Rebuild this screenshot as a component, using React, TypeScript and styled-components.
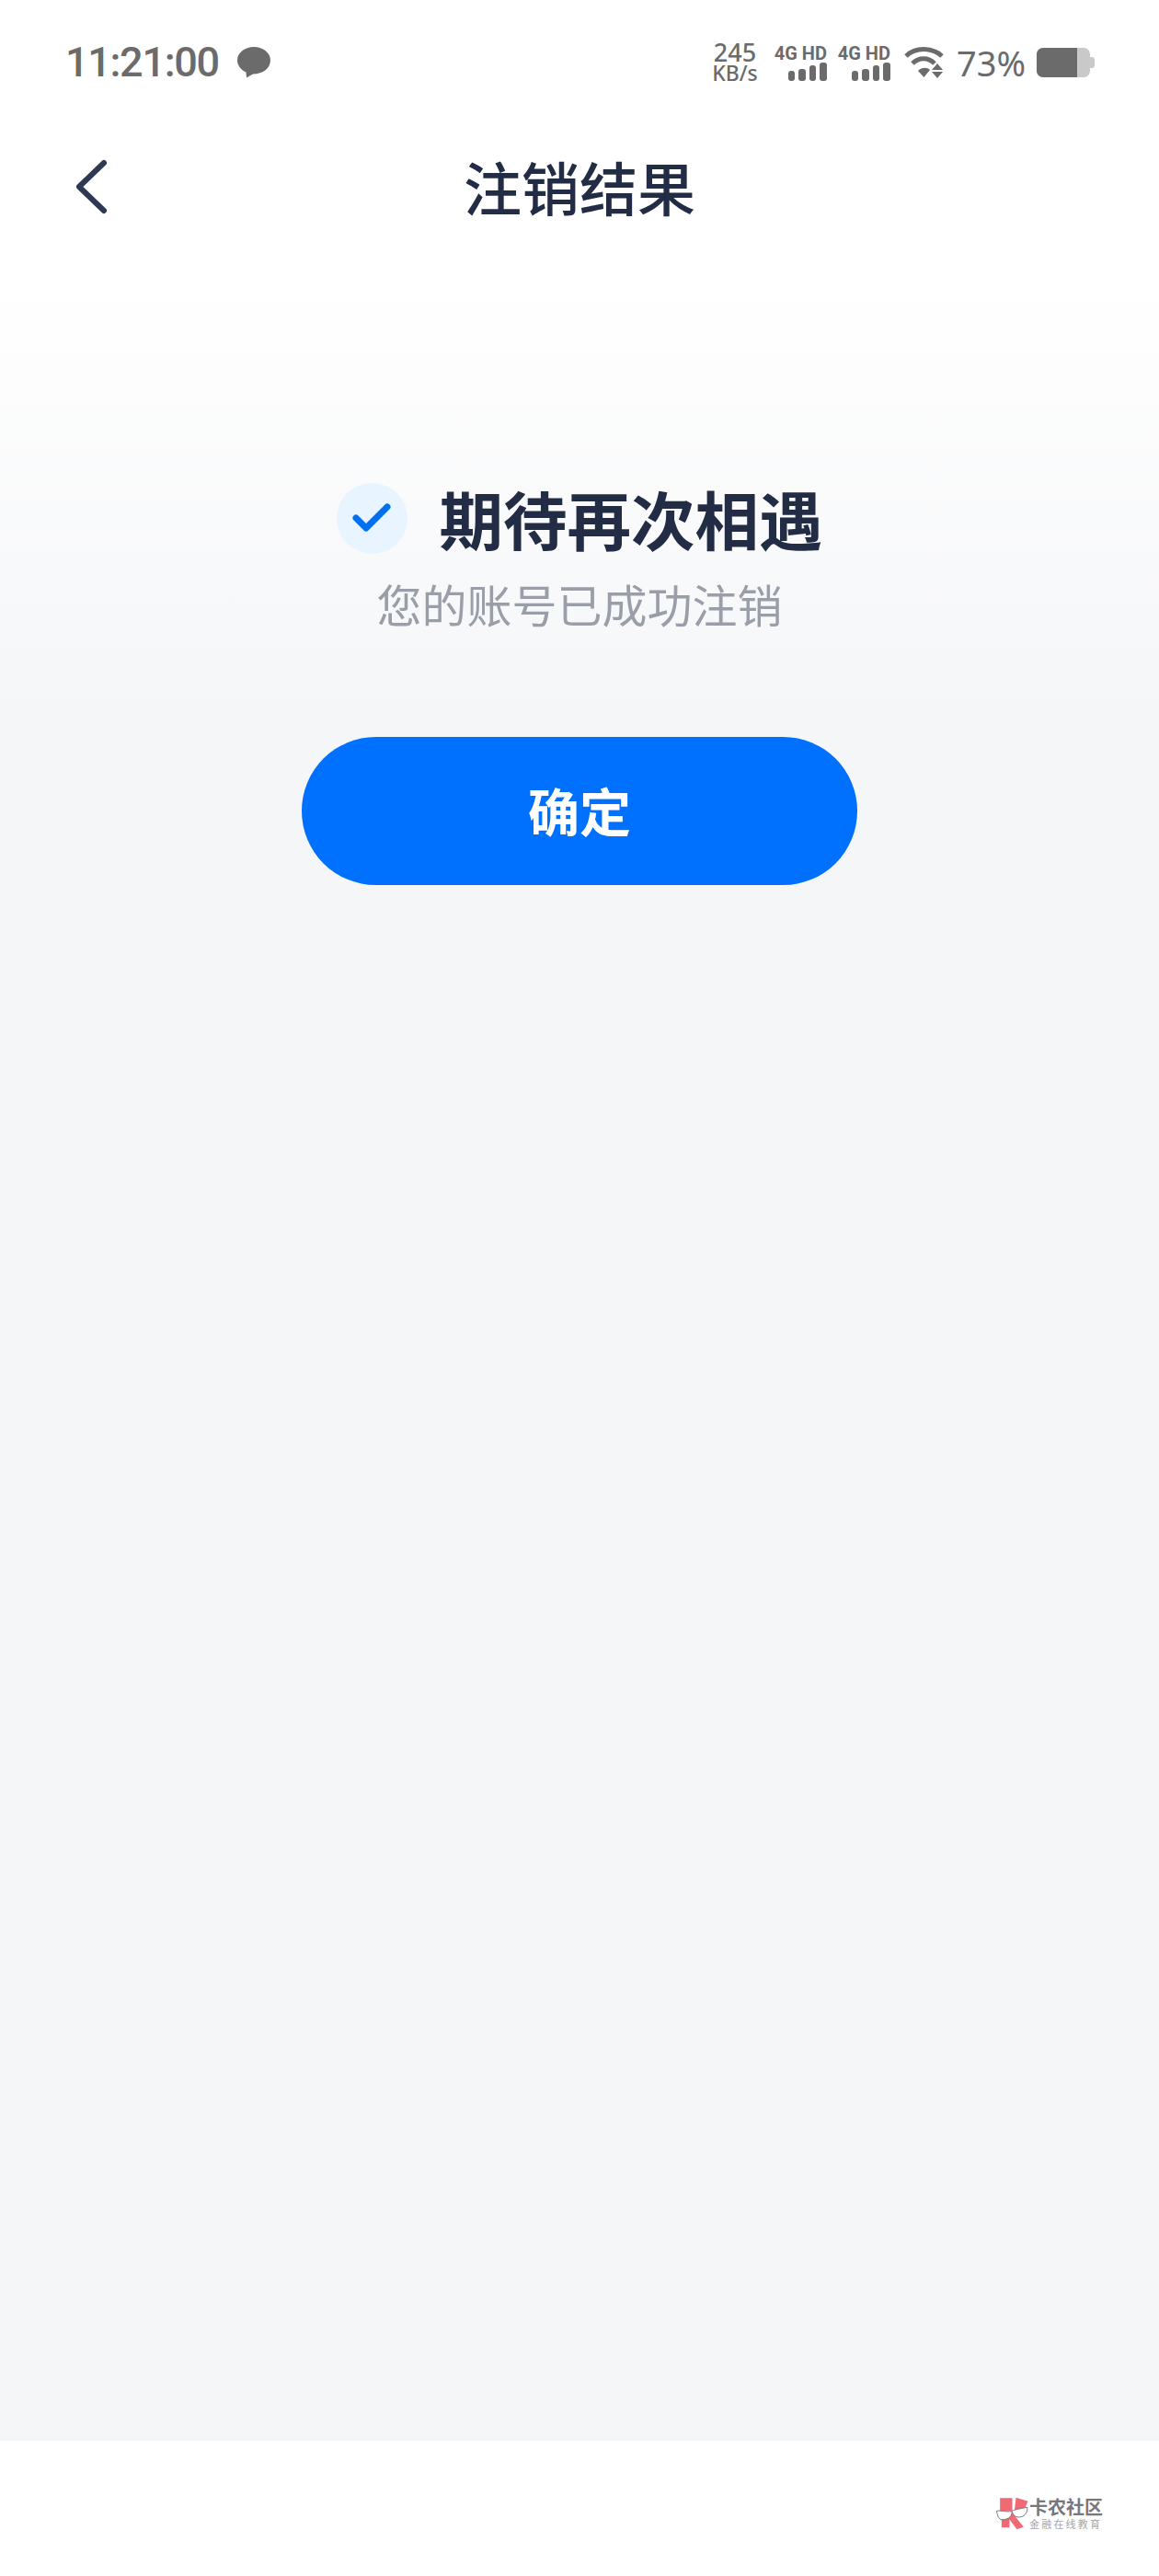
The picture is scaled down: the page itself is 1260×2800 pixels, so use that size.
import React from 'react';
import styled, { createGlobalStyle } from 'styled-components';

const GlobalStyle = createGlobalStyle`
  html, body {
    margin: 0;
    padding: 0;
    background: #ffffff;
  }
  body {
    font-family: 'Noto Sans CJK SC', 'Noto Sans', sans-serif;
  }
`;

const Page = styled.div`
  display: flex;
  flex-direction: column;
  width: 1260px;
  height: 2800px;
  overflow: hidden;
`;

const StatusBar = styled.div`
  display: flex;
  align-items: center;
  justify-content: space-between;
  height: 135px;
  padding: 0 70px 0 71px;
  box-sizing: border-box;
  color: #6b6b6b;
`;

const StatusGroup = styled.div`
  display: flex;
  align-items: center;
`;

const Clock = styled.span`
  font-family: Roboto, sans-serif;
  font-size: 45px;
  font-weight: 500;
  letter-spacing: -1.3px;
  line-height: 1;
`;

const Speed = styled.div`
  display: flex;
  flex-direction: column;
  align-items: center;
  width: 50px;
  margin-right: 18px;
  font-family: 'Noto Sans', sans-serif;
  font-weight: 500;
  line-height: 23px;
`;

const SpeedValue = styled.span`
  font-size: 27px;
`;

const SpeedUnit = styled.span`
  font-size: 23px;
`;

const Signal = styled.div`
  display: flex;
  flex-direction: column;
  align-items: flex-end;
  width: 57px;
  margin-right: 12px;
`;

const SignalLabel = styled.span`
  font-family: Roboto, sans-serif;
  font-size: 20px;
  font-weight: 700;
  line-height: 20px;
  white-space: nowrap;
`;

const Percent = styled.span`
  margin: 0 12px 0 13px;
  font-family: 'Noto Sans', sans-serif;
  font-size: 38px;
  line-height: 1;
`;

const Header = styled.header`
  display: flex;
  align-items: center;
  justify-content: center;
  position: relative;
  height: 140px;
  padding-bottom: 8px;
  box-sizing: border-box;
`;

const BackButton = styled.button`
  position: absolute;
  left: 80px;
  top: 36px;
  display: flex;
  padding: 0;
  border: none;
  background: none;
`;

const Title = styled.h1`
  margin: 0;
  font-size: 63px;
  font-weight: 500;
  line-height: 1;
  color: #222c45;
`;

const Content = styled.main`
  flex: 1;
  display: flex;
  flex-direction: column;
  align-items: center;
  background: linear-gradient(to bottom, #ffffff 30px, #f5f6f8 510px);
  padding-top: 248px;
`;

const Headline = styled.div`
  display: flex;
  align-items: center;
  gap: 35px;
`;

const CheckBadge = styled.span`
  display: flex;
  align-items: center;
  justify-content: center;
  width: 77px;
  height: 77px;
  border-radius: 50%;
  background: #e8f4ff;
`;

const HeadlineText = styled.h2`
  margin: 0;
  font-size: 69.5px;
  font-weight: 700;
  line-height: 80px;
  color: #222c45;
`;

const Subtitle = styled.p`
  margin: 21px 0 0;
  font-size: 49px;
  line-height: 64px;
  color: #9a9ea9;
`;

const ConfirmButton = styled.button`
  width: 604px;
  height: 161px;
  margin-top: 113px;
  padding: 0 0 5px;
  border: none;
  border-radius: 81px;
  background: #0070ff;
  color: #ffffff;
  font-family: inherit;
  font-size: 56px;
  font-weight: 700;
`;

const Footer = styled.footer`
  display: flex;
  align-items: center;
  justify-content: flex-end;
  height: 147px;
  padding: 11px 61px 0 0;
  box-sizing: border-box;
  background: #ffffff;
`;

const WatermarkText = styled.div`
  display: flex;
  flex-direction: column;
  align-items: flex-start;
`;

const WatermarkName = styled.span`
  font-size: 20px;
  font-weight: 700;
  line-height: 22px;
  color: #77777c;
`;

const WatermarkSlogan = styled.span`
  font-size: 11px;
  letter-spacing: 2.2px;
  line-height: 14px;
  color: #a6a6aa;
`;

function SignalBars() {
  return (
    <svg width="42" height="20" viewBox="0 0 42 20" fill="#6b6b6b">
      <rect x="0" y="9" width="7" height="11" rx="3" />
      <rect x="11" y="7" width="8" height="13" rx="3" />
      <rect x="23" y="3" width="7" height="17" rx="3" />
      <rect x="34" y="0" width="8" height="20" rx="3" />
    </svg>
  );
}

function App() {
  return (
    <Page>
      <GlobalStyle />
      <StatusBar>
        <StatusGroup>
          <Clock>11:21:00</Clock>
          <svg width="36" height="34" viewBox="0 0 36 34" style={{ marginLeft: 20 }}>
            <path
              d="M18 0C8 0 0 6.5 0 14.5C0 20 4 25 9.5 27.5L10 33.5L17 29.5C28 29.5 36 23 36 14.5C36 6.5 28 0 18 0Z"
              fill="#6b6b6b"
            />
          </svg>
        </StatusGroup>
        <StatusGroup>
          <Speed>
            <SpeedValue>245</SpeedValue>
            <SpeedUnit>KB/s</SpeedUnit>
          </Speed>
          <Signal>
            <SignalLabel>4G HD</SignalLabel>
            <SignalBars />
          </Signal>
          <Signal>
            <SignalLabel>4G HD</SignalLabel>
            <SignalBars />
          </Signal>
          <svg width="44" height="36" viewBox="0 0 44 36" style={{ marginLeft: 3 }}>
            <g fill="none" stroke="#6b6b6b" strokeWidth="5">
              <path d="M2 11C12 1 30 1 41 11" />
              <path d="M9 19C16 12 26 12 33 19" />
            </g>
            <path d="M15 27C19 23 25 23 28 26L21.5 34Z" fill="#6b6b6b" />
            <path d="M36 19L42 26H30Z M30 28H42L36 35Z" fill="#6b6b6b" />
          </svg>
          <Percent>73%</Percent>
          <svg width="63" height="32" viewBox="0 0 63 32">
            <path d="M44 0H51C55 0 58 3 58 7V10H60C62 10 63 11 63 13V19C63 21 62 22 60 22H58V25C58 29 55 32 51 32H44Z" fill="#c9c9c9" />
            <path d="M7 0H44V32H7C3 32 0 29 0 25V7C0 3 3 0 7 0Z" fill="#6b6b6b" />
          </svg>
        </StatusGroup>
      </StatusBar>
      <Header>
        <BackButton>
          <svg width="38" height="64" viewBox="0 0 38 64" fill="none">
            <path d="M33 6L6 32L33 58" stroke="#2e3954" strokeWidth="6" strokeLinecap="round" strokeLinejoin="round" />
          </svg>
        </BackButton>
        <Title>注销结果</Title>
      </Header>
      <Content>
        <Headline>
          <CheckBadge>
            <svg width="42" height="34" viewBox="0 0 42 34" fill="none">
              <path d="M4 17L15 28L38 5" stroke="#0070f0" strokeWidth="7" strokeLinecap="round" strokeLinejoin="round" />
            </svg>
          </CheckBadge>
          <HeadlineText>期待再次相遇</HeadlineText>
        </Headline>
        <Subtitle>您的账号已成功注销</Subtitle>
        <ConfirmButton>确定</ConfirmButton>
      </Content>
      <Footer>
        <svg width="37" height="40" viewBox="30 20 110 120">
          <path
            d="M45 30H85V72H45Z M97 28L136 40L120 78L92 72Z M50 95H76V126H50Z M84 76L122 124L100 132L72 94Z"
            fill="#ef6a75"
          />
          <path d="M34 72C42 70 52 72 60 73C72 74 82 74 84 72C86 96 62 102 48 100C40 98 36 84 34 72Z" fill="#ffffff" stroke="#77777c" strokeWidth="3" />
          <path d="M84 72C92 68 110 64 134 60C136 80 122 92 106 92C94 92 86 84 84 72Z" fill="#ffffff" stroke="#77777c" strokeWidth="3" />
        </svg>
        <WatermarkText>
          <WatermarkName>卡农社区</WatermarkName>
          <WatermarkSlogan>金融在线教育</WatermarkSlogan>
        </WatermarkText>
      </Footer>
    </Page>
  );
}

export default App;
